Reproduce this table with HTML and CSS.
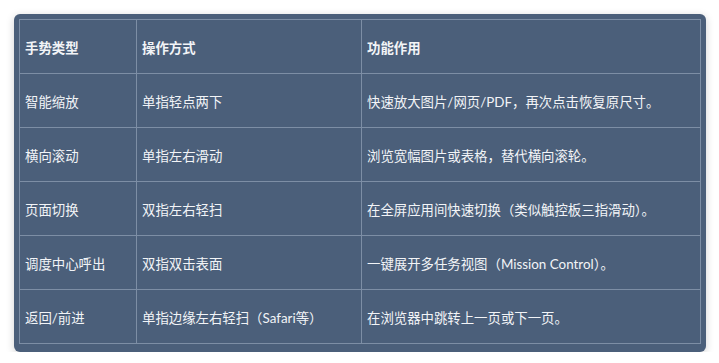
FILE: index.html
```html
<!DOCTYPE html>
<html lang="zh-CN">
<head>
<meta charset="utf-8">
<link rel="stylesheet" href="styles.css">
</head>
<body>
<div class="card">
  <table class="gestures">
    <thead>
      <tr><th>手势类型</th><th>操作方式</th><th>功能作用</th></tr>
    </thead>
    <tbody>
      <tr><td>智能缩放</td><td>单指轻点两下</td><td>快速放大图片/网页/PDF，再次点击恢复原尺寸。</td></tr>
      <tr><td>横向滚动</td><td>单指左右滑动</td><td>浏览宽幅图片或表格，替代横向滚轮。</td></tr>
      <tr><td>页面切换</td><td>双指左右轻扫</td><td>在全屏应用间快速切换（类似触控板三指滑动）。</td></tr>
      <tr><td>调度中心呼出</td><td>双指双击表面</td><td>一键展开多任务视图（Mission Control）。</td></tr>
      <tr><td>返回/前进</td><td>单指边缘左右轻扫（Safari等）</td><td>在浏览器中跳转上一页或下一页。</td></tr>
    </tbody>
  </table>
</div>
</body>
</html>
```

FILE: styles.css
```css
html, body {
  margin: 0;
  padding: 0;
  background: #ffffff;
}
body {
  padding: 14px 0 0 14px;
  font-family: "Lato", "Noto Sans CJK SC", sans-serif;
  font-size: 13.4px;
  color: #f2f4f7;
}
.card {
  width: 692px;
  box-sizing: border-box;
  padding: 5px 5px 8px 5px;
  background: #4b5f7a;
  border-radius: 6px;
  box-shadow: 0 2px 8px rgba(0, 0, 0, 0.18);
}
.gestures {
  width: 682px;
  border-collapse: collapse;
  table-layout: fixed;
}
.gestures th,
.gestures td {
  border: 1px solid #7d8ea5;
  height: 54px;
  padding: 0 5px;
  text-align: left;
  vertical-align: middle;
  box-sizing: border-box;
}
.gestures th {
  font-weight: 700;
}
.gestures th:nth-child(1) { width: 117px; }
.gestures th:nth-child(2) { width: 225px; }
```
